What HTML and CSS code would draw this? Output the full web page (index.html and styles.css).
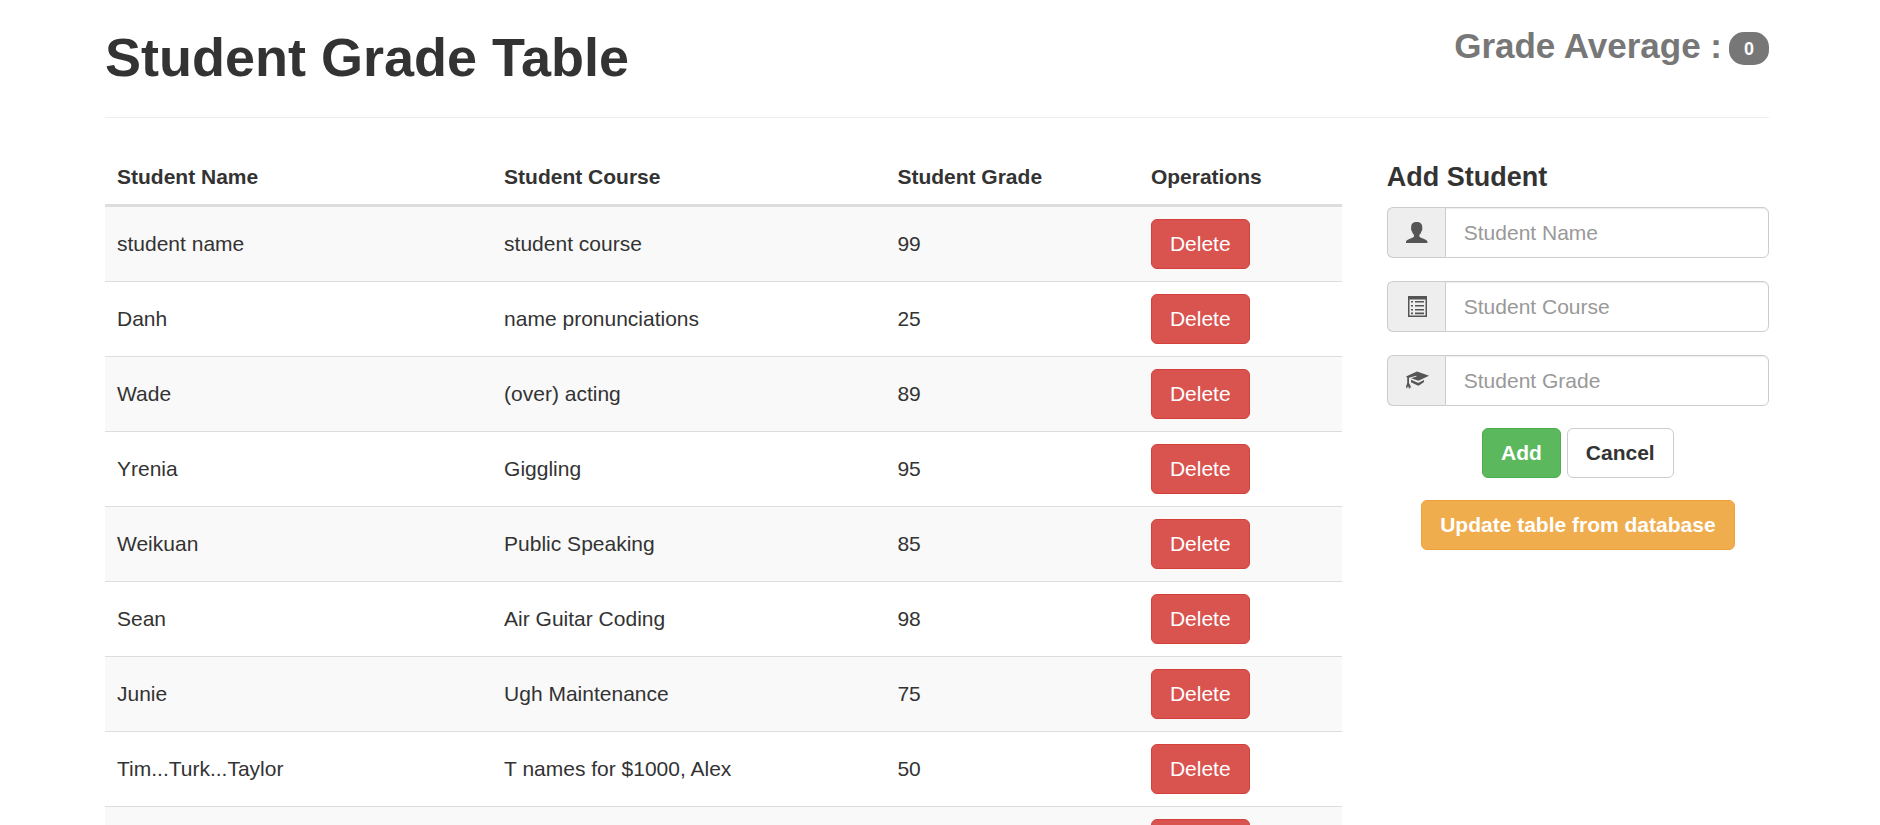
FILE: index.html
```html
<!DOCTYPE html>
<html lang="en">
<head>
<meta charset="utf-8">
<meta name="viewport" content="width=device-width, initial-scale=1">
<title>Student Grade Table</title>
<link rel="stylesheet" href="styles.css">
</head>
<body>
<div class="container">
  <header class="page-header">
    <h1 class="page-title">Student Grade Table</h1>
    <p class="average">Grade Average : <span class="badge">0</span></p>
  </header>
  <main class="layout">
    <section class="list">
      <table class="grades">
        <thead>
          <tr>
            <th class="col-name" scope="col">Student Name</th>
            <th class="col-course" scope="col">Student Course</th>
            <th class="col-grade" scope="col">Student Grade</th>
            <th scope="col">Operations</th>
          </tr>
        </thead>
        <tbody>
          <tr><td>student name</td><td>student course</td><td>99</td><td><button class="btn btn-danger" type="button">Delete</button></td></tr>
          <tr><td>Danh</td><td>name pronunciations</td><td>25</td><td><button class="btn btn-danger" type="button">Delete</button></td></tr>
          <tr><td>Wade</td><td>(over) acting</td><td>89</td><td><button class="btn btn-danger" type="button">Delete</button></td></tr>
          <tr><td>Yrenia</td><td>Giggling</td><td>95</td><td><button class="btn btn-danger" type="button">Delete</button></td></tr>
          <tr><td>Weikuan</td><td>Public Speaking</td><td>85</td><td><button class="btn btn-danger" type="button">Delete</button></td></tr>
          <tr><td>Sean</td><td>Air Guitar Coding</td><td>98</td><td><button class="btn btn-danger" type="button">Delete</button></td></tr>
          <tr><td>Junie</td><td>Ugh Maintenance</td><td>75</td><td><button class="btn btn-danger" type="button">Delete</button></td></tr>
          <tr><td>Tim...Turk...Taylor</td><td>T names for $1000, Alex</td><td>50</td><td><button class="btn btn-danger" type="button">Delete</button></td></tr>
          <tr><td></td><td></td><td></td><td><button class="btn btn-danger" type="button">Delete</button></td></tr>
        </tbody>
      </table>
    </section>
    <form class="add-form">
      <h2 class="form-title">Add Student</h2>
      <div class="fields">
        <div class="input-group">
          <label class="addon" for="student-name">
            <svg class="icon" viewBox="0 0 21 21" aria-hidden="true"><path d="M10.700 0C7.200 0 5.200 1.800 5.200 5C5.200 6.200 5 6.500 5.100 7.400C5.200 8.300 5.700 8.700 6 9.500C6.400 11 7.200 12 8 12.800V14.200C7.800 15.200 6.400 15.600 4.400 16.500C2.200 17.500 0 18.400 0 19.800V21H21.400V19.800C21.400 18.400 19.200 17.500 17 16.500C15 15.600 13.600 15.200 13.400 14.200V12.800C14.200 12 15 11 15.400 9.500C15.700 8.700 16.200 8.300 16.300 7.400C16.400 6.500 16.200 6.200 16.200 5C16.200 1.800 14.200 0 10.700 0Z"/></svg>
          </label>
          <input class="input" id="student-name" type="text" placeholder="Student Name" aria-label="Student Name">
        </div>
        <div class="input-group">
          <label class="addon" for="student-course">
            <svg class="icon" viewBox="0 0 21 21" aria-hidden="true"><path fill-rule="evenodd" d="M2 0H21V21H2ZM3.500 3.600V19.500H19.500V3.600ZM5 5H7V6.600H5ZM9 5H18V6.600H9ZM5 9H7V10.600H5ZM9 9H18V10.600H9ZM5 13H7V14.600H5ZM9 13H18V14.600H9ZM5 16.600H7V18.200H5ZM9 16.600H18V18.200H9Z"/></svg>
          </label>
          <input class="input" id="student-course" type="text" placeholder="Student Course" aria-label="Student Course">
        </div>
        <div class="input-group">
          <label class="addon" for="student-grade">
            <svg class="icon" viewBox="0 0 21 21" aria-hidden="true"><path d="M11 1.600L23 5.800L12.400 10.800L5.200 8.200L10.600 6.500L10.200 5.700L3 7.800V13L5.400 17.800L4 17.200L3.200 19.200L2.100 16L0.800 18.800L0 16.800L1.200 13V7.400L0 6.400ZM5 9.800L11.800 12.700H12.600L18 9.900V12L13 15.600H11.600L5 12.200Z"/></svg>
          </label>
          <input class="input" id="student-grade" type="text" placeholder="Student Grade" aria-label="Student Grade">
        </div>
      </div>
      <div class="actions">
        <button class="btn btn-strong btn-success" type="button">Add</button>
        <button class="btn btn-strong btn-default" type="button">Cancel</button>
      </div>
      <div class="actions">
        <button class="btn btn-strong btn-warning" type="button">Update table from database</button>
      </div>
    </form>
  </main>
</div>
</body>
</html>
```
FILE: styles.css
```css
* { box-sizing: border-box; }

html { overflow: hidden; }

body {
  margin: 0;
  background: #fff;
  color: #333;
  font: 21px/30px "Liberation Sans", Arial, sans-serif;
}

.container { padding: 0 111px 0 105px; }

.page-header {
  display: flex;
  justify-content: space-between;
  align-items: flex-start;
  padding: 28px 0 31px;
  border-bottom: 1px solid #eee;
}

.page-title {
  margin: 0;
  font-size: 54px;
  line-height: 58px;
}

.average {
  display: flex;
  align-items: flex-start;
  gap: 7px;
  margin: 0;
  color: #777;
  font-size: 35px;
  font-weight: 700;
  line-height: 36px;
}

.badge {
  margin-top: 4px;
  padding: 8px 15px 7px;
  border-radius: 15px;
  background: #777;
  color: #fff;
  font-size: 18px;
  line-height: 18px;
}

.layout {
  display: grid;
  grid-template-columns: repeat(12, 1fr);
  column-gap: 45px;
  padding-top: 32px;
}

.list { grid-column: span 9; }

.add-form { grid-column: span 3; }

.grades {
  width: 100%;
  border-spacing: 0;
  table-layout: fixed;
}

.grades th,
.grades td {
  padding: 12px;
  text-align: left;
  vertical-align: middle;
}

.grades th { border-bottom: 3px solid #ddd; }

.grades td { border-top: 1px solid #ddd; }

.grades tbody tr:first-child td { border-top: 0; }

.grades tbody tr:nth-child(odd) { background: #f9f9f9; }

.col-name { width: 31.3%; }

.col-course { width: 31.8%; }

.col-grade { width: 20.5%; }

.btn {
  display: block;
  padding: 9px 18px;
  border: 1px solid transparent;
  border-radius: 6px;
  color: #fff;
  font: inherit;
  white-space: nowrap;
  cursor: pointer;
}

.btn-strong { font-weight: 700; }

.btn-danger { background: #d9534f; border-color: #d43f3a; }

.btn-success { background: #5cb85c; border-color: #4cae4c; }

.btn-warning { background: #f0ad4e; border-color: #eea236; }

.btn-default { background: #fff; border-color: #ccc; color: #333; }

.form-title {
  margin: 0;
  padding: 12px 0 15px;
  font-size: 27px;
  line-height: 30px;
}

.fields {
  display: grid;
  gap: 23px;
}

.input-group {
  display: flex;
  height: 51px;
}

.addon {
  display: flex;
  align-items: center;
  justify-content: center;
  flex: none;
  width: 58px;
  border: 1px solid #ccc;
  border-right: 0;
  border-radius: 6px 0 0 6px;
  background: #eee;
}

.icon {
  width: 21px;
  height: 21px;
  overflow: visible;
  fill: #555;
}

.input {
  flex: 1;
  min-width: 0;
  padding: 9px 18px;
  border: 1px solid #ccc;
  border-radius: 0 6px 6px 0;
  background: #fff;
  box-shadow: inset 0 1px 1px rgba(0, 0, 0, 0.075);
  color: #555;
  font: inherit;
}

.input::placeholder { color: #999; opacity: 1; }

.actions {
  display: flex;
  justify-content: center;
  gap: 6px;
  margin-top: 22px;
}
```
